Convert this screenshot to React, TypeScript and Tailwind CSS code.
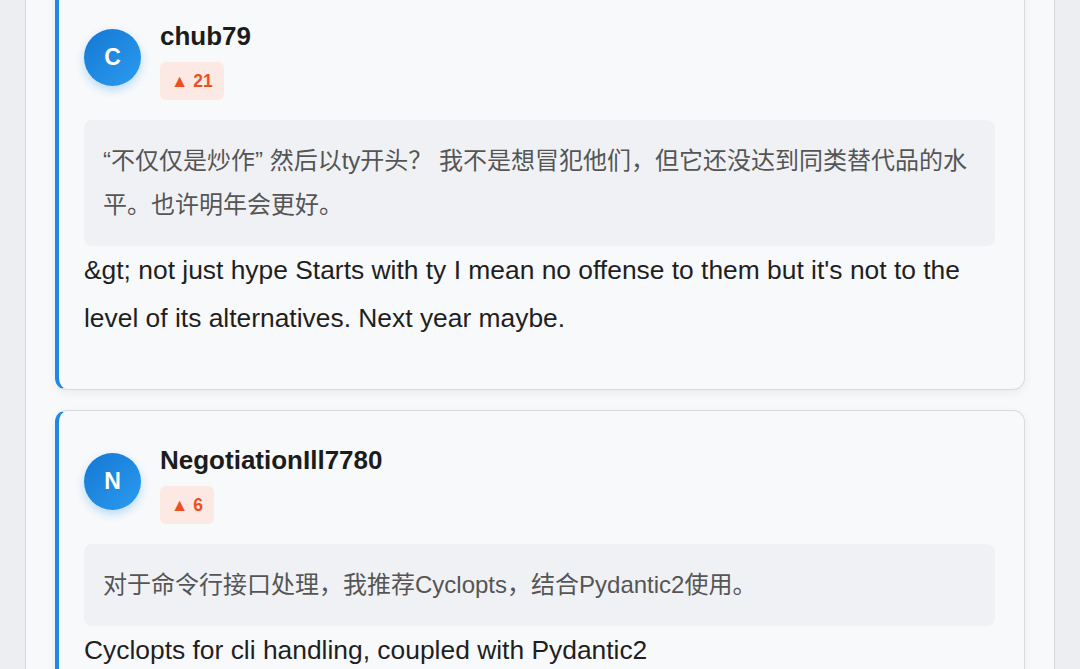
import React from 'react';

interface Comment {
  author: string;
  score: number;
  translation: string;
  original: string;
}

const comments: Comment[] = [
  {
    author: 'chub79',
    score: 21,
    translation:
      '“不仅仅是炒作” 然后以ty开头？ 我不是想冒犯他们，但它还没达到同类替代品的水平。也许明年会更好。',
    original:
      "&gt; not just hype Starts with ty I mean no offense to them but it's not to the level of its alternatives. Next year maybe.",
  },
  {
    author: 'NegotiationIll7780',
    score: 6,
    translation: '对于命令行接口处理，我推荐Cyclopts，结合Pydantic2使用。',
    original: 'Cyclopts for cli handling, coupled with Pydantic2',
  },
];

function CommentCard({ comment }: { comment: Comment }) {
  return (
    <div className="mb-[20px] rounded-xl border border-[#d9dbdf] border-l-4 border-l-[#1e88e5] bg-[#f8f9fb] pt-[34px] pb-[47px] pl-[25px] pr-[29px] shadow-[0_3px_10px_rgba(0,0,0,0.06)]">
      <div className="flex items-start gap-[19px]">
        <div className="mt-[8px] flex h-[57px] w-[57px] shrink-0 items-center justify-center rounded-full bg-gradient-to-br from-[#1677d2] to-[#2a9cf0] text-[23px] font-bold text-white shadow-[0_4px_10px_rgba(33,150,243,0.3)]">
          {comment.author.charAt(0).toUpperCase()}
        </div>
        <div className="flex flex-col items-start">
          <div className="text-[26px] leading-[30px] font-bold text-[#1c1c1c]">{comment.author}</div>
          <div className="mt-[11px] rounded-md bg-[#fde9e4] px-[11px] py-[7px] text-[17.5px] leading-[24px] font-bold text-[#ec5020]">
            ▲ {comment.score}
          </div>
        </div>
      </div>
      <div className="mt-[20px] rounded-lg bg-[#f0f1f4] px-[19px] py-[19px] text-[24px] leading-[44px] text-[#555]">
        {comment.translation}
      </div>
      <p className="text-[26.4px] leading-[48px] text-[#1f1f1f]">{comment.original}</p>
    </div>
  );
}

export default function App() {
  return (
    <div
      className="flex h-[669px] overflow-hidden bg-[#eceef1] px-[25px]"
      style={{ fontFamily: '"Liberation Sans", "Noto Sans CJK SC", sans-serif' }}
    >
      <div className="w-full border-x border-[#d6d8dc] bg-[#f8f9fb] px-[29px]">
        <div className="-mt-[14px]">
          {comments.map((c) => (
            <CommentCard key={c.author} comment={c} />
          ))}
        </div>
      </div>
    </div>
  );
}
